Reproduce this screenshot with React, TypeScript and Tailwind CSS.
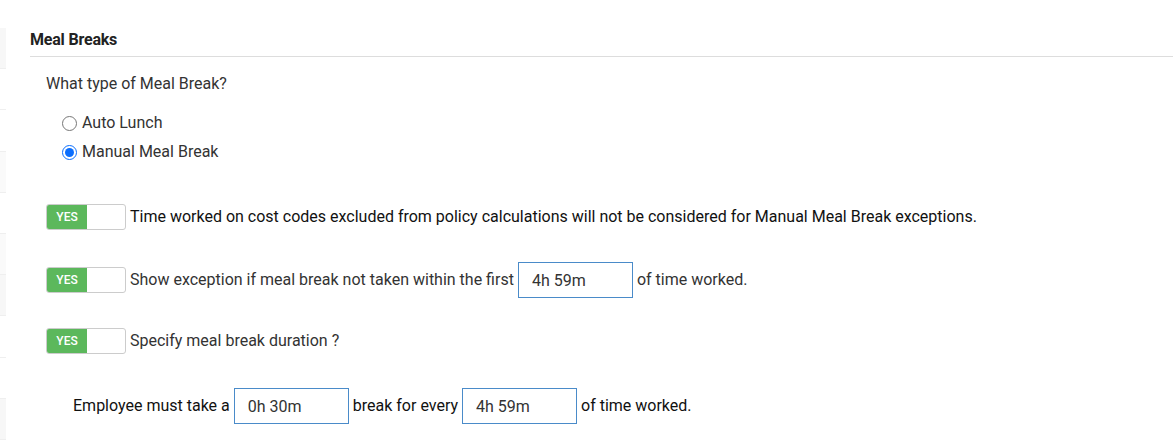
import { useState } from 'react';

function Toggle() {
  return (
    <div className="flex h-[26px] w-[80px] shrink-0 overflow-hidden rounded-[3px] border border-[#cccccc] bg-white">
      <div className="flex w-[40px] items-center justify-center bg-[#5cb85c] text-[12px] font-medium text-white">
        YES
      </div>
    </div>
  );
}

function TimeInput({ value }: { value: string }) {
  return (
    <input
      defaultValue={value}
      className="h-[36px] w-[115px] border border-[#4a8bc9] bg-white px-[13px] text-[16px] text-[#333] outline-none"
    />
  );
}

const sideRows = [
  'bg-[#f7f7f7]',
  'bg-white',
  'bg-white',
  'bg-[#fafafa]',
  'bg-white',
  'bg-[#fafafa]',
  'bg-[#f7f7f7]',
  'bg-white',
  'bg-white',
  'bg-[#f7f7f7]',
];

export default function App() {
  const [type, setType] = useState('manual');

  return (
    <div className="flex h-[440px] w-[1173px] overflow-hidden bg-white font-['Roboto',sans-serif] text-[16px] leading-[20px] text-[#333]">
      {/* sidebar edge */}
      <div className="mt-[28px] flex w-[6px] shrink-0 flex-col">
        {sideRows.map((c, i) => (
          <div key={i} className={`h-[43px] border-b border-[#efefef] ${c}`} />
        ))}
      </div>

      <div className="ml-[24px] flex-1">
        <div className="mt-[30px] border-b border-[#dddddd] pb-[6px] font-bold tracking-[-0.2px] text-[#222]">
          Meal Breaks
        </div>

        <div className="pl-[16px]">
          <p className="mt-[17px]">What type of Meal Break?</p>

          <div className="mt-[19px] flex flex-col gap-[9px] pl-[16px]">
            {[
              { id: 'auto', label: 'Auto Lunch' },
              { id: 'manual', label: 'Manual Meal Break' },
            ].map((o) => (
              <label key={o.id} className="flex h-[20px] items-center gap-[5px]">
                <input
                  type="radio"
                  name="meal"
                  checked={type === o.id}
                  onChange={() => setType(o.id)}
                  className="m-0 h-[15px] w-[15px] accent-[#0b6efd]"
                />
                {o.label}
              </label>
            ))}
          </div>

          <div className="mt-[42px] flex items-center gap-[4px] text-[#111]">
            <Toggle />
            <span>
              Time worked on cost codes excluded from policy calculations will not be considered for Manual Meal Break
              exceptions.
            </span>
          </div>

          <div className="mt-[32px] flex items-center gap-[4px]">
            <Toggle />
            <span>Show exception if meal break not taken within the first</span>
            <TimeInput value="4h 59m" />
            <span>of time worked.</span>
          </div>

          <div className="mt-[30px] flex items-center gap-[4px]">
            <Toggle />
            <span>Specify meal break duration ?</span>
          </div>

          <div className="mt-[34px] flex items-center gap-[4px] pl-[27px] text-[#111]">
            <span>Employee must take a</span>
            <TimeInput value="0h 30m" />
            <span>break for every</span>
            <TimeInput value="4h 59m" />
            <span>of time worked.</span>
          </div>
        </div>
      </div>
    </div>
  );
}
